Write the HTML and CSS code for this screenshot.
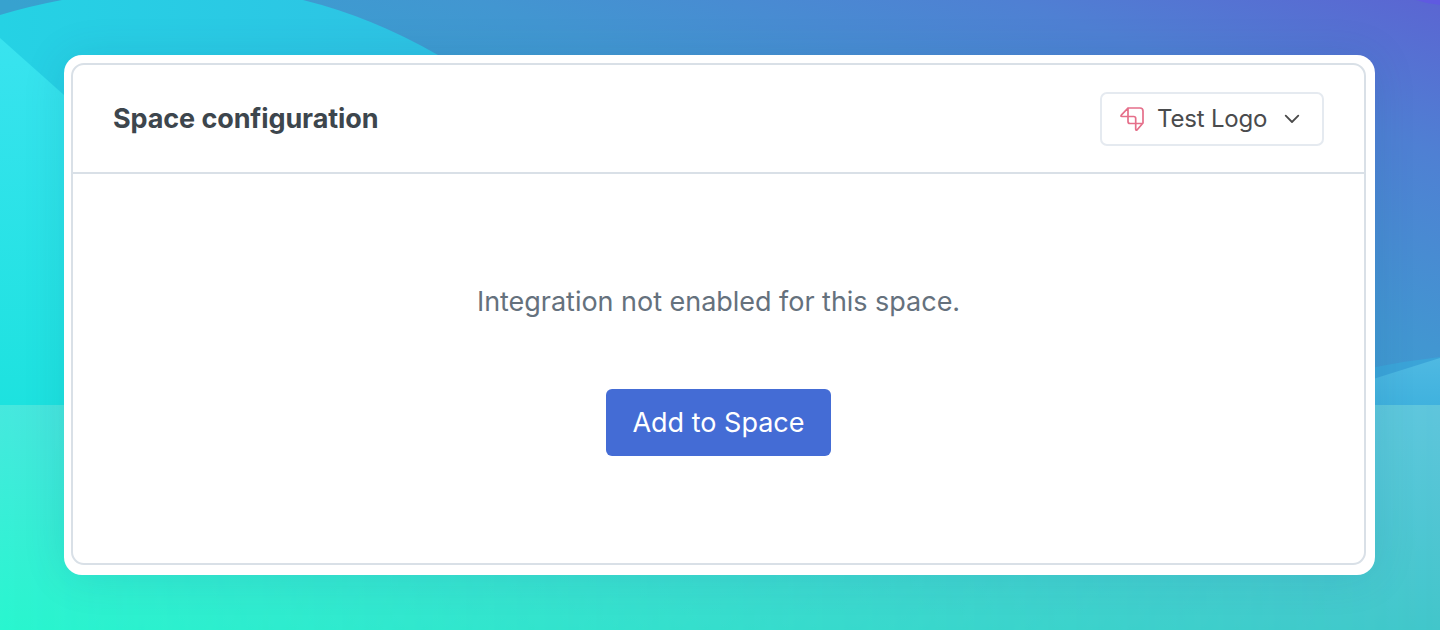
FILE: index.html
```html
<!DOCTYPE html>
<html lang="en">
<head>
<meta charset="utf-8">
<title>Space configuration</title>
<link rel="stylesheet" href="styles.css">
</head>
<body>
<svg class="backdrop" viewBox="0 0 1440 630" preserveAspectRatio="none" aria-hidden="true">
  <defs>
    <linearGradient id="sky" gradientUnits="userSpaceOnUse" x1="424" y1="154" x2="592" y2="-309">
      <stop offset="0" stop-color="#37a2cf"/><stop offset=".33" stop-color="#4296d1"/><stop offset=".7" stop-color="#4f80d3"/><stop offset="1" stop-color="#5b65d2"/>
    </linearGradient>
    <linearGradient id="arc" x1="0" y1="0" x2="1" y2="0">
      <stop offset="0" stop-color="#25d2e4"/><stop offset="1" stop-color="#30c0e4"/>
    </linearGradient>
    <linearGradient id="left" x1="0" y1="0" x2="0" y2="1">
      <stop offset="0" stop-color="#39e3ef"/><stop offset="1" stop-color="#1de2df"/>
    </linearGradient>
    <linearGradient id="low" x1="0" y1="0" x2="0" y2="1">
      <stop offset="0" stop-color="#46e8de"/><stop offset="1" stop-color="#29f6cf"/>
    </linearGradient>
    <linearGradient id="lowRight" x1="0" y1="0" x2="0" y2="1">
      <stop offset="0" stop-color="#5fc5dc"/><stop offset="1" stop-color="#42c6ca"/>
    </linearGradient>
    <linearGradient id="fade" x1="0" y1="0" x2="1" y2="0">
      <stop offset="0" stop-color="#fff" stop-opacity="0"/><stop offset="1" stop-color="#fff"/>
    </linearGradient>
    <linearGradient id="pool" x1="0" y1="0" x2="0" y2="1">
      <stop offset="0" stop-color="#4fb9e2"/><stop offset="1" stop-color="#40b2de"/>
    </linearGradient>
    <mask id="across"><rect y="405" width="1440" height="225" fill="url(#fade)"/></mask>
  </defs>
  <rect width="1440" height="630" fill="url(#sky)"/>
  <path d="M1416 0Q1428 4 1440 5V0Z" fill="#5f5ae0"/>
  <path d="M0 15Q30 6 62 0H303Q372 17 438 55L500 100V200H0Z" fill="url(#arc)"/>
  <path d="M0 38L64 95V405H0Z" fill="url(#left)"/>
  <path d="M1370 368Q1405 361 1440 357V405H1370Z" fill="#3ba4d8"/>
  <path d="M1370 380L1440 358V405H1370Z" fill="url(#pool)"/>
  <rect y="405" width="1440" height="225" fill="url(#low)"/>
  <rect y="405" width="1440" height="225" fill="url(#lowRight)" mask="url(#across)"/>
</svg>
<main class="card">
  <section class="panel">
    <header class="panel-header">
      <h1 class="title">Space configuration</h1>
      <button class="picker" type="button">
        <svg class="logo" viewBox="0 0 26 26" aria-hidden="true">
          <path d="M9 2H21Q24 2 24 5V17L18 24Q16.700 24.800 16.700 23V12.500Q16.700 10.500 14.700 10.500H3Q1.200 10.500 2.300 9.200L9 2V15.500Q9 17.500 11 17.500H23.500"/>
        </svg>
        <span class="picker-label">Test Logo</span>
        <svg class="chevron" viewBox="0 0 16 10" aria-hidden="true"><path d="M1.700 1.700L8 8L14.300 1.700"/></svg>
      </button>
    </header>
    <div class="panel-body">
      <p class="message">Integration not enabled for this space.</p>
      <button class="add" type="button">Add to Space</button>
    </div>
  </section>
</main>
</body>
</html>
```
FILE: styles.css
```css
* { box-sizing: border-box; }
body {
  margin: 0;
  height: 630px;
  padding: 55px 65px 55px 64px;
  overflow: hidden;
  font-family: Inter, "Liberation Sans", sans-serif;
}
.backdrop { position: absolute; inset: 0; z-index: -1; width: 1440px; height: 630px; }
.card {
  height: 520px;
  padding: 8px 9px 10px 7px;
  background: #fff;
  border-radius: 18px;
  box-shadow: 0 2px 44px rgba(20, 70, 120, .12);
}
.panel {
  height: 502px;
  display: flex;
  flex-direction: column;
  border: 2px solid #d9e0e7;
  border-radius: 13px;
}
.panel-header {
  height: 109px;
  flex: none;
  display: flex;
  align-items: center;
  justify-content: space-between;
  padding: 0 40px;
  border-bottom: 2px solid #d9e0e7;
}
.title { margin: 0; font-size: 27px; line-height: 32px; font-weight: 700; color: #3d464d; letter-spacing: -.1px; }
.picker {
  width: 224px;
  height: 54px;
  display: flex;
  align-items: center;
  padding: 0 0 0 17px;
  border: 2px solid #e5eaf0;
  border-radius: 7px;
  background: #fff;
  color: #4a4b4d;
  font: 400 24px/30px Inter, "Liberation Sans", sans-serif;
  letter-spacing: -.2px;
}
.logo { width: 26px; height: 26px; flex: none; fill: none; stroke: #e56f8a; stroke-width: 1.700; stroke-linejoin: round; }
.picker-label { width: 109px; margin-left: 12px; text-align: left; white-space: nowrap; }
.chevron { width: 16px; height: 10px; margin-left: 18px; fill: none; stroke: #4a4a4a; stroke-width: 1.800; stroke-linecap: round; stroke-linejoin: round; }
.panel-body { flex: 1; display: flex; flex-direction: column; align-items: center; padding-top: 111px; }
.message { margin: 0; font-size: 27px; line-height: 34px; color: #65717d; letter-spacing: -.03px; }
.add {
  width: 225px;
  height: 67px;
  margin-top: 70px;
  padding: 0;
  border: 0;
  border-radius: 6px;
  background: #446cd5;
  color: #fff;
  font: 400 27px/34px Inter, "Liberation Sans", sans-serif;
}
```
